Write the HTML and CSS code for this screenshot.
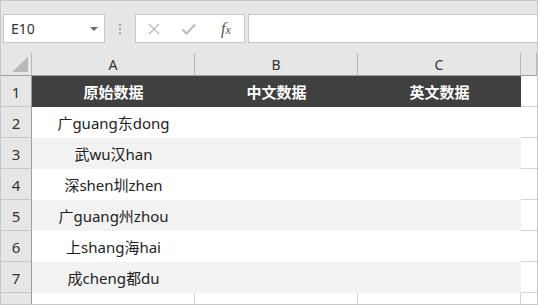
FILE: index.html
```html
<!DOCTYPE html>
<html lang="zh-CN">
<head>
  <meta charset="UTF-8">
  <title>工作表</title>
  <link rel="stylesheet" href="styles.css">
</head>
<body>
  <div class="app">
    <div class="toolbar">
      <div class="name-box">
        <span class="name">E10</span>
        <span class="caret"></span>
      </div>
      <div class="grip"><i></i><i></i><i></i></div>
      <div class="fx-buttons">
        <svg class="btn" width="14" height="14" viewBox="0 0 14 14">
          <path d="M2 2 L12 12 M12 2 L2 12" stroke="#bcbcbc" stroke-width="1.4" fill="none"/>
        </svg>
        <svg class="btn" width="16" height="14" viewBox="0 0 16 14">
          <path d="M1.5 7.5 L5.5 11.5 L14 2.5" stroke="#bcbcbc" stroke-width="2" fill="none"/>
        </svg>
        <span class="fx"><span class="f">f</span><span class="x">x</span></span>
      </div>
      <div class="formula"></div>
    </div>

    <div class="sheet">
      <div class="corner">
        <svg width="16" height="15" viewBox="0 0 16 15">
          <polygon points="16,0 16,15 0,15" fill="#b9b9b9"/>
        </svg>
      </div>
      <div class="col-head">A</div>
      <div class="col-head">B</div>
      <div class="col-head">C</div>
      <div class="col-head"></div>

      <div class="row-head">1</div>
      <div class="cell th">原始数据</div>
      <div class="cell th">中文数据</div>
      <div class="cell th">英文数据</div>
      <div class="cell rest"></div>

      <div class="row-head">2</div>
      <div class="cell">广guang东dong</div>
      <div class="cell"></div>
      <div class="cell"></div>
      <div class="cell rest"></div>

      <div class="row-head">3</div>
      <div class="cell band">武wu汉han</div>
      <div class="cell band"></div>
      <div class="cell band"></div>
      <div class="cell rest"></div>

      <div class="row-head">4</div>
      <div class="cell">深shen圳zhen</div>
      <div class="cell"></div>
      <div class="cell"></div>
      <div class="cell rest"></div>

      <div class="row-head">5</div>
      <div class="cell band">广guang州zhou</div>
      <div class="cell band"></div>
      <div class="cell band"></div>
      <div class="cell rest"></div>

      <div class="row-head">6</div>
      <div class="cell">上shang海hai</div>
      <div class="cell"></div>
      <div class="cell"></div>
      <div class="cell rest"></div>

      <div class="row-head">7</div>
      <div class="cell band">成cheng都du</div>
      <div class="cell band"></div>
      <div class="cell band"></div>
      <div class="cell rest"></div>

      <div class="row-head"></div>
      <div class="cell grid"></div>
      <div class="cell grid"></div>
      <div class="cell grid"></div>
      <div class="cell rest"></div>
    </div>
  </div>
</body>
</html>
```

FILE: styles.css
```css
html, body {
  margin: 0;
  padding: 0;
  background: #fff;
}
.app {
  width: 538px;
  height: 305px;
  box-sizing: border-box;
  border: 1px solid #c8c8c8;
  background: #e6e6e6;
  overflow: hidden;
  font-family: "Noto Sans", "Noto Sans CJK SC", sans-serif;
  color: #222;
}

/* formula bar */
.toolbar {
  display: flex;
  align-items: center;
  height: 52px;
  padding: 13px 0 10px 2px;
  box-sizing: border-box;
}
.name-box {
  width: 102px;
  height: 29px;
  box-sizing: border-box;
  border: 1px solid #c6c6c6;
  background: #fff;
  display: flex;
  align-items: center;
  justify-content: space-between;
  padding: 0 6px 0 7px;
}
.name {
  font-size: 14px;
  color: #333;
}
.caret {
  width: 0;
  height: 0;
  border-left: 4px solid transparent;
  border-right: 4px solid transparent;
  border-top: 4px solid #6a6a6a;
  margin-top: 1px;
}
.grip {
  width: 30px;
  display: flex;
  flex-direction: column;
  align-items: center;
  gap: 2px;
}
.grip i {
  width: 2px;
  height: 2px;
  background: #a8a8a8;
}
.fx-buttons {
  width: 110px;
  height: 29px;
  box-sizing: border-box;
  border: 1px solid #c6c6c6;
  background: #fff;
  display: flex;
  align-items: center;
  padding-left: 11px;
  gap: 20px;
}
.fx {
  font-family: "Liberation Serif", serif;
  font-style: italic;
  color: #555;
  font-size: 16px;
  margin-left: 4px;
  letter-spacing: -1px;
}
.fx .x {
  font-size: 12px;
  margin-left: 1px;
}
.formula {
  flex: 1;
  height: 29px;
  margin-left: 3px;
  box-sizing: border-box;
  border: 1px solid #c6c6c6;
  border-right: none;
  background: #fff;
}

/* sheet grid */
.sheet {
  display: grid;
  grid-template-columns: 31px 163px 163px 163px 1fr;
  grid-template-rows: 23px repeat(8, 31px);
}
.corner {
  background: #e6e6e6;
  border-right: 1px solid #b8b8b8;
  border-bottom: 1px solid #9e9e9e;
  display: flex;
  align-items: flex-end;
  justify-content: flex-end;
  padding: 0 3px 3px 0;
}
.col-head {
  background: #e6e6e6;
  border-right: 1px solid #b8b8b8;
  border-bottom: 1px solid #9e9e9e;
  font-size: 14px;
  color: #333;
  display: flex;
  align-items: center;
  justify-content: center;
}
.col-head:last-child {
  border-right: none;
}
.row-head {
  background: #e6e6e6;
  border-right: 1px solid #9e9e9e;
  border-bottom: 1px solid #c6c6c6;
  font-size: 15px;
  color: #333;
  display: flex;
  align-items: center;
  justify-content: center;
  padding-top: 1px;
}
.cell {
  background: #fff;
  font-size: 15px;
  display: flex;
  align-items: center;
  justify-content: center;
}
.cell.th {
  background: #404040;
  color: #fff;
  font-weight: bold;
}
.cell.band {
  background: #f2f2f2;
}
.cell.grid {
  border-right: 1px solid #d4d4d4;
}
.cell.rest {
  background: #fff;
  border-bottom: 1px solid #d4d4d4;
}
.btn {
  display: block;
}
```
